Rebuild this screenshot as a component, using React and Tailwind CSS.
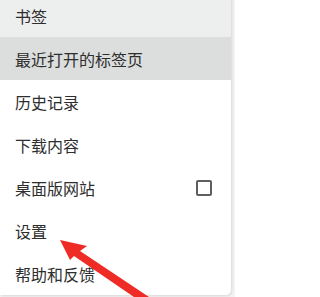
import React from 'react';

const items = [
  { label: '书签', bg: 'bg-[#edeeee]' },
  { label: '最近打开的标签页', bg: 'bg-[#dcdddd]' },
  { label: '历史记录' },
  { label: '下载内容' },
  { label: '桌面版网站', checkbox: true },
  { label: '设置' },
  { label: '帮助和反馈' },
];

export default function App() {
  return (
    <div
      className="relative w-[235px] h-[297px] overflow-hidden bg-[#f4f4f4]"
      style={{ fontFamily: '"Noto Sans CJK SC", "Noto Sans", sans-serif' }}
    >
      <div className="mt-[-6px] w-[231px] bg-white rounded-br-[5px] shadow-[1px_1px_3px_rgba(0,0,0,0.12)]">
        {items.map((item) => (
          <div
            key={item.label}
            className={`flex h-[43px] items-center justify-between pl-[15px] pr-[19px] ${item.bg || ''}`}
          >
            <span className="text-[16px] leading-none text-[#2e2e2e]">{item.label}</span>
            {item.checkbox && (
              <span className="block h-[16px] w-[16px] rounded-[2px] border-2 border-[#5f5f5f]" />
            )}
          </div>
        ))}
      </div>

      {/* red annotation arrow */}
      <svg className="absolute left-0 top-0" width="235" height="297" viewBox="0 0 235 297">
        <polygon
          points="60,240 87,246 80,251 149,297 134,297 74,256 70,260"
          fill="#ee2b24"
        />
      </svg>
    </div>
  );
}
